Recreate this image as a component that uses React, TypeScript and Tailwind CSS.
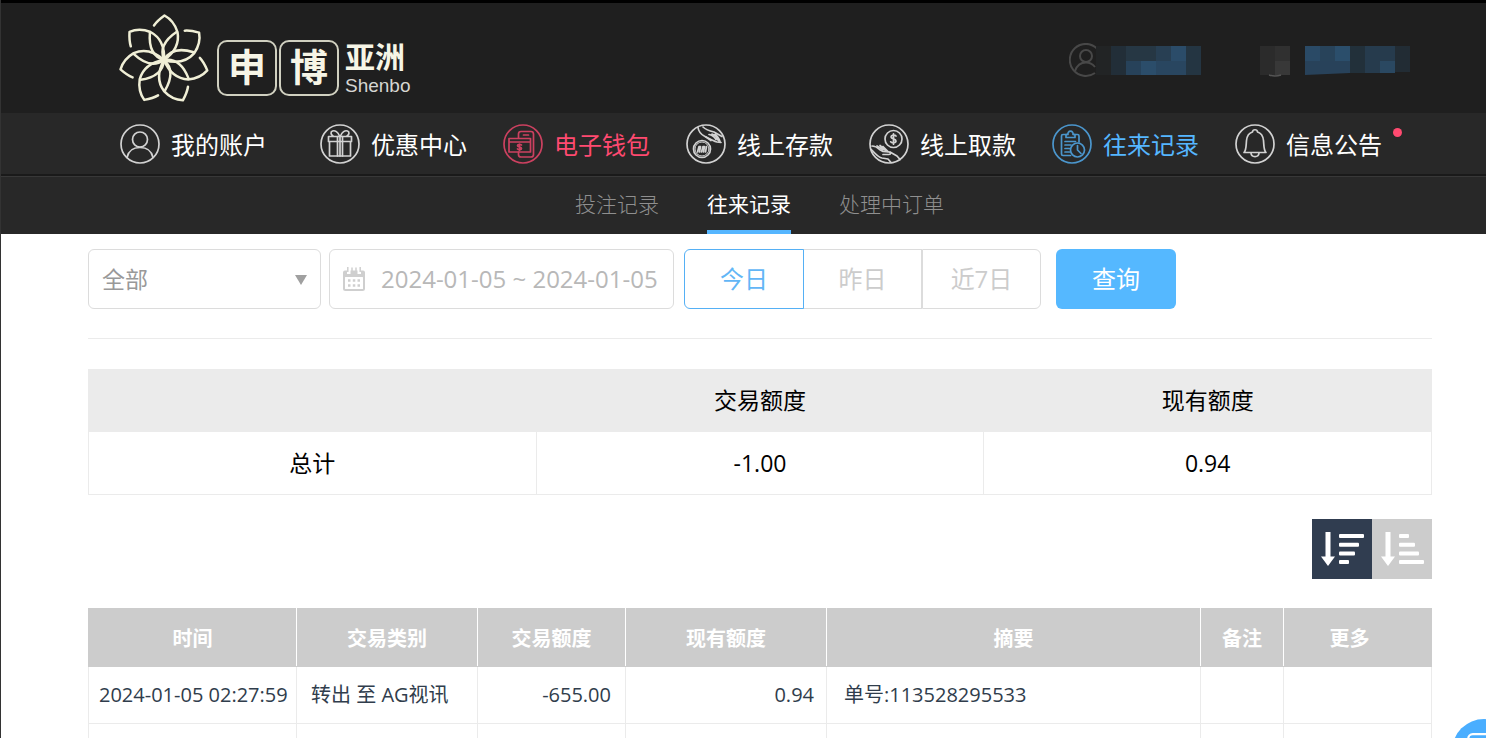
import React, { useState } from 'react';

type IconProps = { className?: string };

function NavCircle({ children }: { children: React.ReactNode }) {
  return (
    <svg
      viewBox="0 0 40 40"
      className="h-10 w-10 shrink-0"
      fill="none"
      stroke="currentColor"
      strokeWidth="1.7"
      strokeLinecap="round"
      strokeLinejoin="round"
      aria-hidden="true"
    >
      <circle cx="20" cy="20" r="19" />
      {children}
    </svg>
  );
}

function AccountIcon() {
  return (
    <NavCircle>
      <circle cx="20" cy="15.5" r="7.5" />
      <path d="M7 33.5C8.5 26.500 13.500 23.500 20 23.500S31.500 26.500 33 33.500" />
    </NavCircle>
  );
}

function GiftIcon() {
  return (
    <NavCircle>
      <path d="M8.500 12.500h23v5h-23zM9.500 17.500h21v14.500h-21z" />
      <path d="M17.500 12.500V32M22.500 12.500V32M20 12V32" />
      <path d="M19.500 12C18 8 15 6 12.500 7S11 11 13 12M20.500 12C22 8 25 6 27.500 7S29 11 27 12" />
    </NavCircle>
  );
}

function WalletIcon() {
  return (
    <NavCircle>
      <path d="M15.500 14V10a2.500 2.500 0 0 1 2.500-2.500h10A2.500 2.500 0 0 1 30.500 10v20.500A2.500 2.500 0 0 1 28 33H18a2.500 2.500 0 0 1-2.500-2.500V28" />
      <path d="M20.500 11h5" />
      <path d="M6 14.500h21.500V28H6zM6 18h21.500" />
      <path d="M18.500 21c-1-1-4-.8-4 .7 0 1.800 4 1 4 2.700 0 1.500-3 1.700-4 .6M16.500 20v6.500" />
    </NavCircle>
  );
}

function DepositIcon() {
  return (
    <NavCircle>
      <circle cx="16" cy="25" r="8.500" />
      <circle cx="16" cy="25" r="7" strokeWidth="1" />
      <path d="M11.500 28l1.500-5.500h1.500l-1 5.500M15.500 28l1.500-5.500h1.500l-1 5.500M19.500 28l1-5.500" />
      <path d="M12 3.500c.5 4 3 7 7 9l7 3.500c2 1 2.500 1.500 5 2l4 .5" />
      <path d="M17 3c3 3 6.500 4 11 5l8 4.500M20 13l5 3.500M23 10.500c3 .5 5 2 7 5M26 10c3 1 5 3 6.500 7M29 10.500c2.500 1.500 4 4 5 7" />
    </NavCircle>
  );
}

function WithdrawIcon() {
  return (
    <NavCircle>
      <circle cx="24.500" cy="15" r="8.500" />
      <path d="M27 12c-1.200-1.500-5-1-5 1 0 2.300 5 1.500 5 4 0 2-4 2.500-5.300.8M24.500 9.800v10.400" />
      <path d="M3 22c3 0 5 1 7.500 3.500l3.500 2 6 .5c2 .2 2 2.500 0 2.500h-6" />
      <path d="M2 25.500c4 3 6 7.500 11 8.500l6 1 3 3.500M8 22l6 4M11 21.500l5.500 5M21 28l7 4 3 3.500M14 22.500l5 5" />
    </NavCircle>
  );
}

function RecordsIcon() {
  return (
    <NavCircle>
      <path d="M18.500 31.500H11a1.500 1.500 0 0 1-1.500-1.500V12A1.500 1.500 0 0 1 11 10.500h4M22 10.500h3.500A1.500 1.500 0 0 1 27 12v6" />
      <path d="M14 13.500v-3h2a2.600 2.600 0 1 1 5 0h2v3z" />
      <path d="M13 17.500h10.500M13 21h6M13 24.500h4.500M13 28h4.500" />
      <circle cx="25.500" cy="26" r="7" />
      <path d="M25.500 21.500V26l3.500 3.500" />
    </NavCircle>
  );
}

function BellIcon() {
  return (
    <NavCircle>
      <path d="M9 28.500C11.500 26 11 21 11.500 16.500 12 12 14.500 8.800 17.500 8c.3-3 4.700-3 5 0 3 .8 5.500 4 6 8.500.5 4.500 0 9.500 2.500 12z" />
      <path d="M16 29c.3 4.800 7.700 4.800 8 0" />
    </NavCircle>
  );
}

function CalendarIcon({ className }: IconProps) {
  return (
    <svg viewBox="0 0 24 26" className={className} aria-hidden="true">
      <path
        d="M3 4.500h2V8h3.500V4.500h7V8H19V4.500h2a2 2 0 0 1 2 2V11H1V6.500a2 2 0 0 1 2-2z"
        fill="currentColor"
      />
      <path d="M5.800 1v5M18.200 1v5M10 1.500v5M14 1.500v5" stroke="currentColor" strokeWidth="1.500" />
      <rect x="2" y="10" width="20" height="14" rx="1.500" fill="none" stroke="currentColor" strokeWidth="2" />
      <path
        d="M6 14.500h2.500M10.800 14.500h2.500M15.500 14.500H18M6 19.500h2.500M10.800 19.500h2.500M15.500 19.500H18"
        stroke="currentColor"
        strokeWidth="2.500"
      />
    </svg>
  );
}

function SortIcon({ widths }: { widths: number[] }) {
  return (
    <svg viewBox="0 0 60 60" className="h-[60px] w-[60px]" fill="currentColor" aria-hidden="true">
      <path d="M13.500 13h5v24.500H23L16 47 9 37.500h4.500z" />
      {widths.map((w, i) => (
        <rect key={i} x="27" y={15 + i * 8.7} width={w} height="4" rx="1" />
      ))}
    </svg>
  );
}

const petals = [0, 1, 2, 3, 4, 5, 6];

function Flower() {
  return (
    <svg
      viewBox="-46 -46 92 92"
      className="h-[92px] w-[92px]"
      fill="none"
      stroke="#f0efd6"
      strokeWidth="2.500"
      strokeLinecap="round"
      strokeLinejoin="round"
      aria-hidden="true"
    >
      {petals.map((i) => (
        <g key={i} transform={`rotate(${(i * 360) / 7})`}>
          <path d="M-10 -34.500C-7 -39 -3 -42 0.500 -44.500C7 -41 11 -36 13.500 -28C15.500 -17 10 -7 0 0" />
          <path d="M0 0C-4 -10 -1 -19 12.500 -28" />
        </g>
      ))}
    </svg>
  );
}

function Logo() {
  return (
    <a
      href="#"
      className="flex items-center font-['Liberation_Sans','Noto_Sans_CJK_SC',sans-serif] font-bold text-[#f6f5e6]"
    >
      <Flower />
      <span className="ml-[7px] mt-4 flex gap-[2px]">
        {['申', '博'].map((c) => (
          <span
            key={c}
            className="flex h-14 w-[60px] items-center justify-center rounded-[10px] border-2 border-[#d0d0c0] text-[38px] leading-none"
          >
            {c}
          </span>
        ))}
      </span>
      <span className="ml-[6px] mt-5 flex flex-col">
        <span className="text-[30px] leading-8">亚洲</span>
        <span className="text-[19px] font-normal leading-6 text-[#d6d6d2]">Shenbo</span>
      </span>
    </a>
  );
}

// masked user name and balance
function MaskedUser() {
  return (
    <svg viewBox="0 0 134 34" className="h-[34px] w-[134px]" aria-hidden="true">
      <g fill="none" stroke="#484848" strokeWidth="2">
        <path d="M28 5.500A16 16 0 1 0 26 30" />
        <circle cx="17" cy="13" r="6" />
        <path d="M6 28c2-6 6-8.500 11-8.500 4 0 7 2 9 4.500" />
      </g>
      <rect x="27" y="3" width="15" height="29" fill="#222425" />
      <rect x="42" y="3" width="15" height="29" fill="#222e38" />
      <rect x="57" y="3" width="30" height="15" fill="#263744" />
      <rect x="87" y="3" width="15" height="15" fill="#283f53" />
      <rect x="102" y="3" width="15" height="15" fill="#2b4c69" />
      <rect x="57" y="18" width="15" height="14" fill="#27425a" />
      <rect x="72" y="18" width="15" height="14" fill="#2b4d6a" />
      <rect x="87" y="18" width="30" height="14" fill="#294660" />
      <rect x="117" y="3" width="15" height="29" fill="#243542" />
    </svg>
  );
}

function MaskedBalance() {
  return (
    <svg viewBox="0 0 150 34" className="h-[34px] w-[150px]" aria-hidden="true">
      <rect x="0" y="3" width="15" height="29" fill="#2b2b2b" />
      <rect x="15" y="3" width="15" height="15" fill="#303030" />
      <rect x="15" y="18" width="15" height="14" fill="#383838" />
      <path d="M9 32q6 2 12 0" stroke="#555" strokeWidth="1.500" fill="none" />
      <rect x="45" y="3" width="15" height="15" fill="#2a4a66" />
      <rect x="60" y="3" width="15" height="15" fill="#28435a" />
      <rect x="75" y="3" width="15" height="15" fill="#2b4e6b" />
      <rect x="90" y="3" width="15" height="27" fill="#22303a" />
      <rect x="105" y="3" width="30" height="15" fill="#263b4d" />
      <rect x="135" y="3" width="15" height="26" fill="#222c34" />
      <path d="M45 18h45v12l-45 2z" fill="#28425a" />
      <rect x="105" y="18" width="15" height="12" fill="#263b4d" />
      <rect x="120" y="18" width="15" height="12" fill="#2a4861" />
    </svg>
  );
}

const navItems = [
  { label: '我的账户', icon: <AccountIcon />, className: 'pr-[17px] text-white', iconClass: 'text-[#d2d2d2]' },
  { label: '优惠中心', icon: <GiftIcon />, className: 'text-white', iconClass: 'text-[#d2d2d2]' },
  { label: '电子钱包', icon: <WalletIcon />, className: 'text-[#ff4a70]', iconClass: 'text-[#cc4160]' },
  { label: '线上存款', icon: <DepositIcon />, className: 'text-white', iconClass: 'text-[#d2d2d2]' },
  { label: '线上取款', icon: <WithdrawIcon />, className: 'text-white', iconClass: 'text-[#d2d2d2]' },
  { label: '往来记录', icon: <RecordsIcon />, className: 'text-[#55b6ff]', iconClass: 'text-[#4b96cd]' },
  { label: '信息公告', icon: <BellIcon />, className: 'text-white', iconClass: 'text-[#d2d2d2]', dot: true },
];

const tabs = ['投注记录', '往来记录', '处理中订单'];

const ranges = [
  { label: '今日', width: 'w-[120px] rounded-l-md' },
  { label: '昨日', width: '-ml-px w-[119px]' },
  { label: '近7日', width: 'w-[119px] rounded-r-md' },
];

const columns = ['时间', '交易类别', '交易额度', '现有额度', '摘要', '备注'];

export default function App() {
  const [tab, setTab] = useState('往来记录');
  const [range, setRange] = useState('今日');
  const [type, setType] = useState('all');
  const [dates, setDates] = useState('2024-01-05 ~ 2024-01-05');
  const [sort, setSort] = useState('desc');

  return (
    <div className="min-h-screen border-l border-[#333] bg-white font-['Open_Sans','Noto_Sans_CJK_SC',sans-serif] text-black">
      <header className="bg-[#1f1f1f]">
        <div className="flex h-[113px] items-center justify-between border-t-[3px] border-black pl-[117px] pr-[76px] pt-[3px]">
          <Logo />
          <div className="flex gap-[57px]">
            <MaskedUser />
            <MaskedBalance />
          </div>
        </div>
        <nav className="flex h-[63px] items-center gap-9 border-b-2 border-[#1a1a1a] bg-[#282828] pl-[119px] pt-px">
          {navItems.map((item) => (
            <a
              key={item.label}
              href="#"
              className={`relative flex shrink-0 items-center gap-[11px] text-2xl ${item.className}`}
            >
              <span className={item.iconClass}>{item.icon}</span>
              <span className="pt-px">{item.label}</span>
              {item.dot && (
                <span className="absolute -right-5 top-1 h-[9px] w-[9px] rounded-full bg-[#ff4a70]" />
              )}
            </a>
          ))}
        </nav>
        <div className="flex h-[58px] justify-center gap-12 border-t border-[#383838] bg-[#282828] pl-8 text-[21px] font-light">
          {tabs.map((t) => (
            <button
              key={t}
              type="button"
              onClick={() => setTab(t)}
              className={`border-b-4 pt-[3px] ${
                tab === t ? 'border-[#55b6ff] font-normal text-white' : 'border-transparent text-[#8f8f8f]'
              }`}
            >
              {t}
            </button>
          ))}
        </div>
      </header>

      <main className="pl-[87px] pr-[54px] pt-[15px]">
        <form
          className="flex border-b border-[#ebebeb] pb-[29px] text-2xl"
          onSubmit={(e) => e.preventDefault()}
        >
          <div className="relative mr-2 w-[233px]">
            <select
              aria-label="交易类别"
              value={type}
              onChange={(e) => setType(e.target.value)}
              className="h-[60px] w-full appearance-none rounded-md border border-[#dcdcdc] bg-white pl-[13px] text-[23px] text-[#999]"
            >
              <option value="all">全部</option>
            </select>
            <svg
              viewBox="0 0 12 10"
              className="pointer-events-none absolute right-[14px] top-[26px] h-[10px] w-3"
              fill="#a0a0a0"
              aria-hidden="true"
            >
              <path d="M0 0h12L6 10z" />
            </svg>
          </div>
          <label className="mr-[10px] flex h-[60px] w-[345px] items-center gap-[15px] rounded-md border border-[#dcdcdc] pl-3">
            <CalendarIcon className="h-[26px] w-6 shrink-0 text-[#cfcfcf]" />
            <input
              type="text"
              aria-label="日期"
              value={dates}
              onChange={(e) => setDates(e.target.value)}
              className="w-full min-w-0 text-[#b8b8b8] outline-none"
            />
          </label>
          <div className="flex">
            {ranges.map((r) => (
              <button
                key={r.label}
                type="button"
                onClick={() => setRange(r.label)}
                className={`h-[60px] border ${r.width} ${
                  range === r.label
                    ? 'relative z-10 border-[#55b0f5] text-[#62b6f6]'
                    : 'border-[#dcdcdc] text-[#ccc]'
                }`}
              >
                {r.label}
              </button>
            ))}
          </div>
          <button type="submit" className="ml-[15px] h-[60px] w-[120px] rounded-md bg-[#55b8ff] text-white">
            查询
          </button>
        </form>

        <table className="mt-[30px] w-full table-fixed border-collapse text-center text-[23px]">
          <thead>
            <tr className="h-[62px] bg-[#ebebeb]">
              <th aria-label="合计" className="border border-[#ebebeb]" />
              <th className="border border-[#ebebeb] font-normal">交易额度</th>
              <th className="border border-[#ebebeb] font-normal">现有额度</th>
            </tr>
          </thead>
          <tbody>
            <tr className="h-[63px]">
              <td className="border border-[#ebebeb]">总计</td>
              <td className="border border-[#ebebeb]">-1.00</td>
              <td className="border border-[#ebebeb]">0.94</td>
            </tr>
          </tbody>
        </table>

        <div className="mt-6 flex justify-end">
          <button
            type="button"
            aria-label="降序"
            onClick={() => setSort('desc')}
            className={sort === 'desc' ? 'bg-[#303d50] text-white' : 'bg-[#ccc] text-white'}
          >
            <SortIcon widths={[25, 20, 16, 10]} />
          </button>
          <button
            type="button"
            aria-label="升序"
            onClick={() => setSort('asc')}
            className={sort === 'asc' ? 'bg-[#303d50] text-white' : 'bg-[#ccc] text-white'}
          >
            <SortIcon widths={[10, 16, 20, 25]} />
          </button>
        </div>

        <table className="mt-[29px] w-full table-fixed border-collapse text-xl text-[#303d4c]">
          <colgroup>
            <col className="w-[208px]" />
            <col className="w-[181px]" />
            <col className="w-[148px]" />
            <col className="w-[201px]" />
            <col className="w-[374px]" />
            <col className="w-[83px]" />
            <col />
          </colgroup>
          <thead>
            <tr className="h-[58px] bg-[#ccc] font-bold text-white">
              {columns.map((c) => (
                <th key={c} className="border border-[#ccc] border-r-white pt-[3px]">
                  {c}
                </th>
              ))}
              <th className="border border-[#ccc] pr-4 pt-[3px]">更多</th>
            </tr>
          </thead>
          <tbody>
            <tr className="h-[57px]">
              <td className="whitespace-nowrap border border-[#ebebeb] pl-[10px]">2024-01-05 02:27:59</td>
              <td className="border border-[#ebebeb] pl-[14px]">转出 至 AG视讯</td>
              <td className="border border-[#ebebeb] pr-[14px] text-right">-655.00</td>
              <td className="border border-[#ebebeb] pr-3 text-right">0.94</td>
              <td className="border border-[#ebebeb] pl-[17px]">单号:113528295533</td>
              <td className="border border-[#ebebeb]" />
              <td className="border border-[#ebebeb]" />
            </tr>
            <tr className="h-[57px]">
              <td className="border border-[#ebebeb]" />
              <td className="border border-[#ebebeb]" />
              <td className="border border-[#ebebeb]" />
              <td className="border border-[#ebebeb]" />
              <td className="border border-[#ebebeb]" />
              <td className="border border-[#ebebeb]" />
              <td className="border border-[#ebebeb]" />
            </tr>
          </tbody>
        </table>
      </main>

      <button
        type="button"
        aria-label="客服"
        className="fixed -bottom-[45px] -right-[30px] flex h-16 w-16 items-center justify-center rounded-full bg-[#4aaeff] text-white"
      >
        <svg viewBox="0 0 32 32" className="h-9 w-9" fill="none" stroke="currentColor" strokeWidth="2">
          <path d="M6 1h20a4 4 0 0 1 4 4v14a4 4 0 0 1-4 4H16l-7 6v-6H6a4 4 0 0 1-4-4V5a4 4 0 0 1 4-4z" />
        </svg>
      </button>
    </div>
  );
}
